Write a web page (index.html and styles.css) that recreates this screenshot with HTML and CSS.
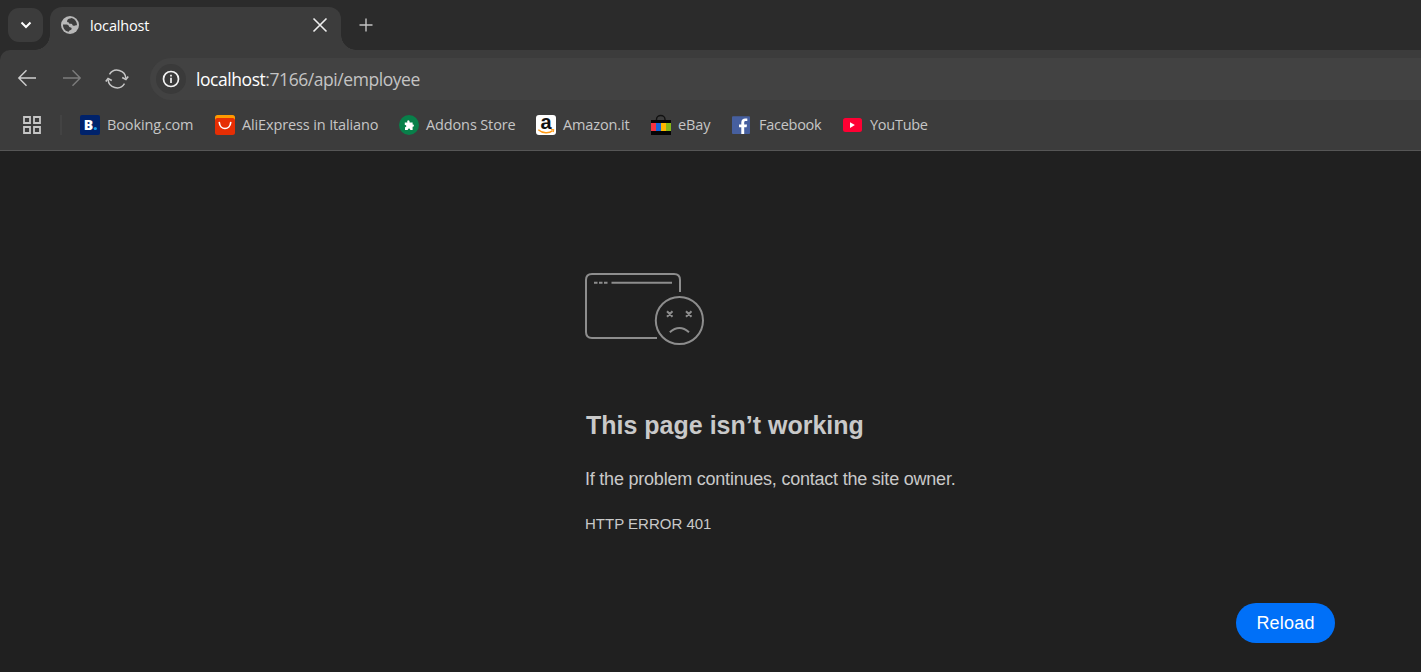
FILE: index.html
```html
<!DOCTYPE html>
<html lang="en">
<head>
<meta charset="utf-8">
<title>localhost</title>
<link rel="stylesheet" href="styles.css">
</head>
<body>
<div class="browser">
  <header class="tabstrip">
    <button class="tab-search" aria-label="Search tabs">
      <svg width="12" height="8" viewBox="0 0 12 8"><path d="M1.500 1.500 6 6l4.500-4.500" fill="none" stroke="#fff" stroke-width="2"/></svg>
    </button>
    <div class="tab">
      <svg class="globe" width="18" height="18" viewBox="0 0 18 18"><circle cx="9" cy="9" r="9" fill="#b8b8b8"/><path d="M10.700 2C8.500 2.600 6.700 2.700 6.100 4.800c-.3 1.200.4 1.500 1.500 1.500.3 1.500 1.100 1.600 2.500 1.500 1.700 0 .9 2 2.500 2 1.500 0 2-.7 3.400-.6C16 6 14 3 10.700 2zM2 8.500c1.600.1 3.900-.2 5.100.5 1.300.8.400 1.900 1.800 2.200 1.500.2 1.900.6 1.700 1.700-.3 1.300-2.700.8-2.700 2.900C4.500 15.500 1.800 12.700 2 8.500z" fill="#3c3c3c"/></svg>
      <span class="tab-title">localhost</span>
      <svg class="close" width="16" height="16" viewBox="0 0 16 16"><path d="M1.500 1.500l13 13m0-13l-13 13" stroke="#eee" stroke-width="1.600"/></svg>
    </div>
    <button class="new-tab" aria-label="New tab">
      <svg width="14" height="14" viewBox="0 0 14 14"><path d="M7 .5v13M.5 7h13" stroke="#c4c4c4" stroke-width="1.400"/></svg>
    </button>
  </header>

  <div class="chrome">
    <nav class="toolbar">
      <svg class="nav-icon" width="20" height="18" viewBox="0 0 20 18"><path d="M19 9H2m7.500-7.800L1.800 9l7.700 7.800" fill="none" stroke="#cfcfcf" stroke-width="1.400"/></svg>
      <svg class="nav-icon" width="20" height="18" viewBox="0 0 20 18"><path d="M1 9h17m-7.500-7.800L18.200 9l-7.700 7.800" fill="none" stroke="#7c7c7c" stroke-width="1.400"/></svg>
      <svg class="reload-icon" width="24" height="20" viewBox="0 0 24 20"><path d="M4.500 5.300A8.900 8.900 0 0 1 20.900 9.500M19.500 14.700A8.900 8.900 0 0 1 3.100 10.500" fill="none" stroke="#c6c6c6" stroke-width="1.500"/><path d="M17.200 8.500l3.700 1.900 2.300-3M.8 12.600l2.300-3 3.700 1.900" fill="none" stroke="#c6c6c6" stroke-width="1.700"/></svg>
      <div class="address">
        <span class="site-info"><svg width="18" height="18" viewBox="0 0 18 18"><circle cx="9" cy="9" r="7.500" fill="none" stroke="#f2f2f2" stroke-width="1.700"/><path d="M9 4.700v1.700M9 7.800v5.200" stroke="#f2f2f2" stroke-width="1.700"/></svg></span>
        <span class="url"><span class="host">localhost</span>:7166/api/employee</span>
      </div>
    </nav>

    <nav class="bookmarks">
      <svg class="apps" width="18" height="18" viewBox="0 0 18 18"><path d="M1 1h6v6H1zM11 1h6v6h-6zM1 11h6v6H1zM11 11h6v6h-6z" fill="none" stroke="#c6c6c6" stroke-width="1.800"/></svg>
      <span class="divider"></span>
      <a class="bookmark booking"><svg width="20" height="20" viewBox="0 0 20 20"><rect width="20" height="20" rx="2" fill="#00226b"/><text class="booking-letter" x="3.800" y="15">B</text><circle cx="15.300" cy="13.500" r="1.600" fill="#18a0e8"/></svg><span class="label">Booking.com</span></a>
      <a class="bookmark aliexpress"><svg width="20" height="20" viewBox="0 0 20 20"><rect width="20" height="16" rx="2.500" fill="#ff9a00"/><rect y="3" width="20" height="17" rx="2.500" fill="#e62e04"/><path d="M4.300 7.500c.7 8 10.700 8 11.400 0" fill="none" stroke="#fff" stroke-width="1.700" stroke-linecap="round"/></svg><span class="label">AliExpress in Italiano</span></a>
      <a class="bookmark addons"><svg width="20" height="20" viewBox="0 0 20 20"><circle cx="10" cy="10" r="10" fill="#08804a"/><path d="M5.800 7.500h2.600C7.300 4.700 11 4.300 10.600 7.500h3v2.100c1.900-.5 1.700 2.600 0 2.200V15h-2.300c-.2-2-2.300-2-2.500 0H6v-2.600c2-.3 1.700-2.300-.2-2.300z" fill="#fff"/></svg><span class="label">Addons Store</span></a>
      <a class="bookmark amazon"><svg width="20" height="20" viewBox="0 0 20 20"><rect width="20" height="20" rx="3" fill="#fff"/><text class="amazon-letter" x="4.500" y="14">a</text><path d="M2.300 14.700c4.600 4 10.600 4.100 14.400.9" fill="none" stroke="#ff9a16" stroke-width="1.500"/><path d="M14.800 14.600l3-.1-.5 2.600" fill="none" stroke="#ff9a16"/></svg><span class="label">Amazon.it</span></a>
      <a class="bookmark ebay"><svg width="20" height="20" viewBox="0 0 20 20"><path d="M5.500 6V4.500C5.500-.8 14 -.8 14 4.500V6" fill="none" stroke="#111" stroke-width="1.400"/><path d="M0 5h20v15H0z" fill="#050505"/><path d="M0 8h5v8H0z" fill="#f5333f"/><path d="M5 8h5v8H5z" fill="#1465d8"/><path d="M10 8h5v8h-5z" fill="#ffb700"/><path d="M15 8h5v8h-5z" fill="#86b817"/></svg><span class="label">eBay</span></a>
      <a class="bookmark facebook"><svg width="20" height="20" viewBox="0 0 20 20"><rect x="0" y="1.300" width="18" height="17.700" rx="1" fill="#465f9f"/><path d="M9.300 19v-6.800H7V9.500h2.300V7.400c0-2.800 1.700-4 4-4 1 0 1.800.1 2 .2v2.500h-1.600c-1.200 0-1.500.6-1.500 1.500v1.900H15l-.4 2.700h-2.400V19z" fill="#fff"/></svg><span class="label">Facebook</span></a>
      <a class="bookmark youtube"><svg width="20" height="20" viewBox="0 0 20 20"><rect y="3" width="19" height="14" rx="2.500" fill="#ff0033"/><path d="M7 7.300v5.600l4.900-2.800z" fill="#fff"/></svg><span class="label">YouTube</span></a>
    </nav>
  </div>

  <main class="page">
    <section class="error">
      <svg class="sad-page" width="120" height="72" viewBox="0 0 120 72"><g fill="none" stroke="#8d8d8d" stroke-width="2"><path d="M95 19V7q0-6-6-6H7Q1 1 1 7v52q0 6 6 6h65"/><path d="M26.500 9.800h60.500"/><path d="M9 9.800h3.500m1.500 0h3.500m1.500 0h3.500"/><circle cx="94.400" cy="47.500" r="23.600"/><path d="M84.800 59.200q9.700-8.400 19.200 0"/><path d="M82 38.300l5.500 5.500m0-5.500L82 43.800M101 38.300l5.500 5.500m0-5.500l-5.500 5.500"/></g></svg>
      <h1 class="title">This page isn’t working</h1>
      <p class="message">If the problem continues, contact the site owner.</p>
      <p class="code">HTTP ERROR 401</p>
    </section>
    <button class="reload">Reload</button>
  </main>
</div>
</body>
</html>
```

FILE: styles.css
```css
* { box-sizing: border-box; }
body { margin: 0; background: #202020; font-family: "Open Sans", "Noto Sans", sans-serif; }
svg { display: block; flex: none; overflow: visible; }
button { border: 0; padding: 0; font: inherit; }
.browser { width: 1421px; height: 672px; overflow: hidden; display: flex; flex-direction: column; background: #2b2b2b; }
.tabstrip { height: 50px; display: flex; align-items: flex-start; padding: 7px 0 0 8px; }
.tab-search { width: 35px; height: 34px; margin-top: 1px; border-radius: 11px; background: #3c3c3c; display: grid; place-items: center; }
.tab { position: relative; width: 291px; height: 43px; margin-left: 7px; padding: 0 13px 7px 11px; display: flex; align-items: center; border-radius: 12px 12px 0 0; background: #3c3c3c; }
.tab::before, .tab::after { content: ""; position: absolute; bottom: 0; width: 15px; height: 15px; }
.tab::before { left: -15px; background: radial-gradient(circle at 0 0, transparent 14.5px, #3c3c3c 15px); }
.tab::after { right: -15px; background: radial-gradient(circle at 100% 0, transparent 14.5px, #3c3c3c 15px); }
.tab-title { margin-left: 11px; padding-top: 2px; color: #fff; font-size: 14.5px; line-height: 20px; letter-spacing: -0.15px; }
.close { margin-left: auto; }
.new-tab { width: 34px; height: 36px; margin-left: 8px; background: none; display: grid; place-items: center; }
.chrome { height: 101px; background: #3c3c3c; border-radius: 10px 0 0 0; border-bottom: 1px solid #565656; }
.toolbar { height: 50px; display: flex; align-items: center; padding: 8px 0 0 17px; }
.nav-icon { margin-right: 25px; margin-bottom: 2px; }
.reload-icon { margin-left: -2px; margin-bottom: 1px; }
.address { flex: 1; height: 42px; margin-left: 21px; padding-left: 6px; border-radius: 21px 0 0 21px; background: #424242; display: flex; align-items: center; }
.site-info { width: 30px; height: 30px; border-radius: 50%; background: #3a3a3a; display: grid; place-items: center; }
.url { margin-left: 10px; color: #c4c4c4; font-size: 17.5px; letter-spacing: -0.44px; white-space: nowrap; }
.host { color: #fff; }
.bookmarks { height: 50px; display: flex; align-items: center; padding-left: 23px; }
.divider { width: 2px; height: 20px; margin: 0 18px 0 19px; background: #434343; }
.bookmark { display: flex; align-items: center; gap: 7px; flex: none; color: #c6c6c6; font-size: 14.5px; letter-spacing: -0.13px; white-space: nowrap; }
.label { padding-bottom: 2px; }
.booking { width: 135px; }
.aliexpress { width: 184px; }
.addons { width: 137px; }
.amazon { width: 115px; }
.ebay { width: 81px; }
.facebook { width: 111px; }
.facebook, .youtube { letter-spacing: -0.27px; }
.booking-letter { font: 800 14px "Open Sans", sans-serif; letter-spacing: 0; fill: #fff; }
.amazon-letter { font: bold 20px "Liberation Sans", sans-serif; letter-spacing: 0; fill: #111; }
.page { flex: 1; display: flex; align-items: flex-start; background: #202020; font-family: "Liberation Sans", Arial, sans-serif; color: #c9c9c9; }
.error { width: 651px; margin-left: 585px; padding-top: 122px; flex: none; white-space: nowrap; }
.title { margin: 65px 0 0 1px; font-size: 25px; line-height: 30px; }
.message { margin: 28px 0 0; font-size: 18px; line-height: 22px; letter-spacing: -0.22px; }
.code { margin: 23px 0 0; font-size: 15px; line-height: 22px; }
.reload { width: 99px; height: 40px; margin-top: 452px; border-radius: 20px; background: #0070f8; color: #fff; font-size: 18px; letter-spacing: 0.2px; }
```
